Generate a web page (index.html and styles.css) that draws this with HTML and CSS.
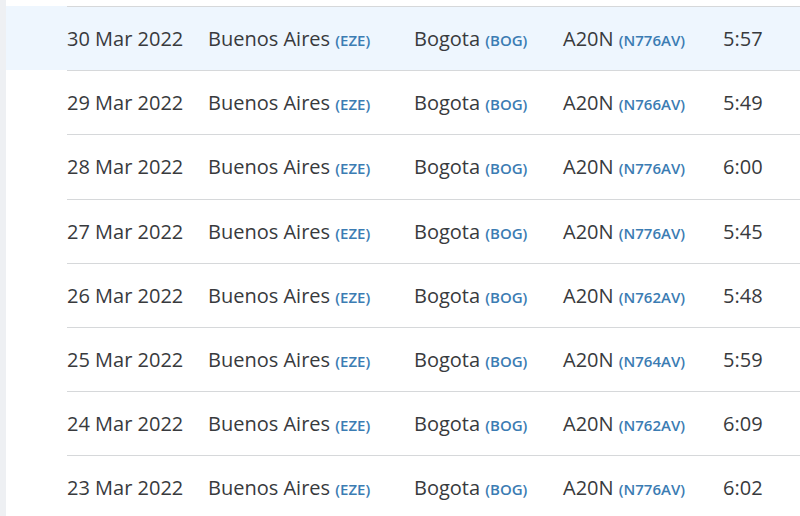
FILE: index.html
```html
<!DOCTYPE html>
<html lang="en">
<head>
<meta charset="utf-8">
<title>Flights</title>
<link rel="stylesheet" href="styles.css">
</head>
<body>
<div class="page">
  <aside class="rail"></aside>
  <main class="list">
    <div class="row active"><div class="cells"><span>30 Mar 2022</span><span>Buenos Aires <b>(EZE)</b></span><span>Bogota <b>(BOG)</b></span><span>A20N <b>(N776AV)</b></span><span>5:57</span></div></div>
    <div class="row"><div class="cells"><span>29 Mar 2022</span><span>Buenos Aires <b>(EZE)</b></span><span>Bogota <b>(BOG)</b></span><span>A20N <b>(N766AV)</b></span><span>5:49</span></div></div>
    <div class="row"><div class="cells"><span>28 Mar 2022</span><span>Buenos Aires <b>(EZE)</b></span><span>Bogota <b>(BOG)</b></span><span>A20N <b>(N776AV)</b></span><span>6:00</span></div></div>
    <div class="row"><div class="cells"><span>27 Mar 2022</span><span>Buenos Aires <b>(EZE)</b></span><span>Bogota <b>(BOG)</b></span><span>A20N <b>(N776AV)</b></span><span>5:45</span></div></div>
    <div class="row"><div class="cells"><span>26 Mar 2022</span><span>Buenos Aires <b>(EZE)</b></span><span>Bogota <b>(BOG)</b></span><span>A20N <b>(N762AV)</b></span><span>5:48</span></div></div>
    <div class="row"><div class="cells"><span>25 Mar 2022</span><span>Buenos Aires <b>(EZE)</b></span><span>Bogota <b>(BOG)</b></span><span>A20N <b>(N764AV)</b></span><span>5:59</span></div></div>
    <div class="row"><div class="cells"><span>24 Mar 2022</span><span>Buenos Aires <b>(EZE)</b></span><span>Bogota <b>(BOG)</b></span><span>A20N <b>(N762AV)</b></span><span>6:09</span></div></div>
    <div class="row"><div class="cells"><span>23 Mar 2022</span><span>Buenos Aires <b>(EZE)</b></span><span>Bogota <b>(BOG)</b></span><span>A20N <b>(N776AV)</b></span><span>6:02</span></div></div>
  </main>
</div>
</body>
</html>
```
FILE: styles.css
```css
html, body {
  margin: 0;
  padding: 0;
  background: #ffffff;
  overflow: hidden;
}
body {
  font-family: "Open Sans", "Liberation Sans", sans-serif;
  color: #383a3d;
}
.page {
  display: flex;
  height: 516px;
}
.rail {
  width: 6px;
  flex: none;
  background: #eef0f3;
}
.list {
  flex: 1;
  padding-top: 6px;
}
.row {
  padding-left: 61px;
}
.row.active {
  background: #eef6fe;
}
.cells {
  box-sizing: border-box;
  height: 64.2px;
  border-top: 1px solid #d6d8da;
  display: grid;
  grid-template-columns: 141px 206px 149px 160px auto;
  align-items: center;
  font-size: 20px;
  white-space: nowrap;
}
.cells b {
  font-weight: 600;
  font-size: 15px;
  color: #3b7cb3;
}
```
